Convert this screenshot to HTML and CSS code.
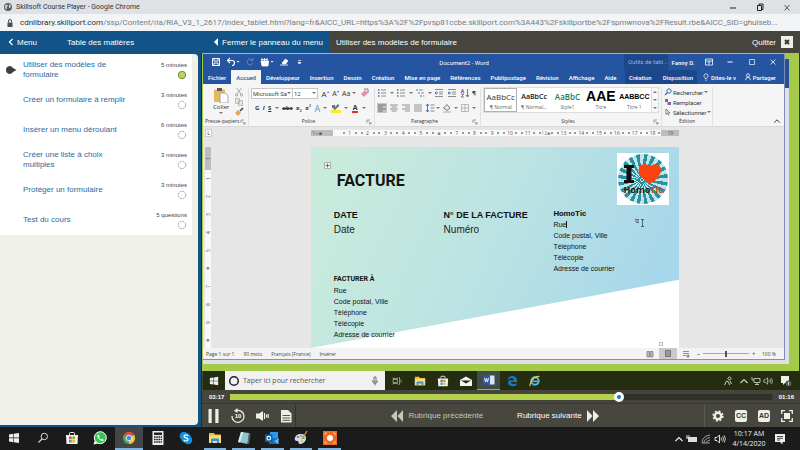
FILE: index.html
```html
<!DOCTYPE html>
<html lang="fr">
<head>
<meta charset="utf-8">
<title>Skillsoft Course Player</title>
<link rel="stylesheet" href="styles.css">
</head>
<body>
<svg class="sprite" aria-hidden="true">
  <symbol id="win" viewBox="0 0 12 12"><path d="M1 2.4 5.4 1.8V5.6H1zM6 1.7 11 1V5.6H6zM1 6.3H5.4V10.2L1 9.6zM6 6.3H11V11L6 10.3z" fill="currentColor"/></symbol>
  <symbol id="folder" viewBox="0 0 14 14"><path d="M1 2h5l1 1.5h6V12H1z" fill="#f3b93c"/><path d="M1 4.5h12V12H1z" fill="#fbdc7d"/><path d="M3 12V8.5q0-1 1-1h6q1 0 1 1V12H9V10H5v2z" fill="#3b8fd6"/></symbol>
  <symbol id="store" viewBox="0 0 14 14"><path d="M4.500 4V2.500q0-1 1-1h3q1 0 1 1V4" fill="none" stroke="#f3f3f3"/><path d="M1 4h12l-.5 9h-11z" fill="#f3f3f3"/><path d="M4 5.500h2.700v2.700H4z" fill="#e8502b"/><path d="M7.300 5.500H10v2.700H7.300z" fill="#7cb82f"/><path d="M4 8.800h2.700v2.700H4z" fill="#2a9fe0"/><path d="M7.300 8.800H10v2.700H7.300z" fill="#f7b71d"/></symbol>
  <symbol id="ring" viewBox="0 0 10 10"><circle cx="5" cy="5" r="3.700" fill="#fff" stroke="#85857f" stroke-width=".8" stroke-dasharray="1.900 1"/></symbol>
  <symbol id="sound" viewBox="0 0 12 10"><path d="M1 3.500h2L5.500 1v8L3 6.500H1z" fill="none" stroke="currentColor" stroke-width=".9"/><path d="M7 3.500q1 1.500 0 3M8.600 2.300q1.900 2.700 0 5.400M10.200 1.300q2.400 3.700 0 7.400" fill="none" stroke="currentColor" stroke-width=".8"/></symbol>
  <symbol id="up" viewBox="0 0 10 10"><path d="M1.500 7 5 3.500 8.500 7" fill="none" stroke="currentColor" stroke-width="1.200"/></symbol>
  <symbol id="launch" viewBox="0 0 6 6"><path d="M1 4V1h3M2.500 2.500 5 5M5 3v2H3" fill="none" stroke="#777" stroke-width=".7"/></symbol>
  <symbol id="list" viewBox="0 0 10 10"><path d="M1 2h1.500M1 5h1.500M1 8h1.500" stroke="#3f6fb5" stroke-width="1.400"/><path d="M4 2h5M4 5h5M4 8h5" stroke="#8c8c8c"/></symbol>
  <symbol id="indent" viewBox="0 0 10 10"><path d="M1 1.500h8M5 4h4M5 6h4M1 8.500h8" stroke="#8c8c8c"/><path d="M1 5h3M2.500 3.500 1 5l1.500 1.500" stroke="#3f6fb5" fill="none"/></symbol>
</svg>

<header class="titlebar">
  <svg class="i10" viewBox="0 0 10 10"><circle cx="5" cy="5" r="4" fill="#5a5d61"/><path d="M2 3.500 4 2.500l1 1.500-1.500 1L4 6.500 3 7.500 2 5.500zM6 2l2 1.500-.5 2L6 6z" fill="#d3d6da"/></svg>
  <span class="grow">Skillsoft Course Player - Google Chrome</span>
  <button aria-label="Réduire"><svg class="i10" viewBox="0 0 10 10"><path d="M2 6h6" stroke="#222"/></svg></button>
  <button aria-label="Restaurer"><svg class="i10" viewBox="0 0 10 10"><path d="M2.500 3.500h4v5h-4zM4 3.500V2h4v5.500H6.500" fill="none" stroke="#222"/></svg></button>
  <button aria-label="Fermer"><svg class="i10" viewBox="0 0 10 10"><path d="M2.500 3 7.500 8.500M7.500 3 2.500 8.500" stroke="#444" stroke-width=".9"/></svg></button>
</header>
<div class="address">
  <svg class="i10" viewBox="0 0 10 10"><path d="M2.500 4.500h5V9h-5z" fill="#4c4f53"/><path d="M3.500 4.500V3q0-1.500 1.500-1.500T6.500 3v1.500" fill="none" stroke="#4c4f53"/></svg>
  <span class="url"><b>cdnlibrary.skillport.com</b>/ssp/Content/ria/RIA_V3_1_2617/index_tablet.html?lang=fr&amp;AICC_URL=https%3A%2F%2Fpvsp81ccbe.skillport.com%3A443%2Fskillportbe%2Fspmwnova%2FResult.rbe&amp;AICC_SID=ghulseb...</span>
</div>

<main class="app">
  <div class="topbar">
    <div class="topmenu">
      <button class="back-btn"><svg class="i8" viewBox="0 0 8 8"><path d="M5.500 1 2.500 4l3 3" fill="none" stroke="#fff" stroke-width="1.200"/></svg>Menu</button>
      <span class="toc-title">Table des matières</span>
      <button class="fold"><svg class="i8" viewBox="0 0 8 8"><path d="M6 0v8L2 4z" fill="#fff"/></svg>Fermer le panneau du menu</button>
    </div>
    <div class="topinfo">
      <span class="grow">Utiliser des modèles de formulaire</span>
      <button class="quit">Quitter <svg class="i12" viewBox="0 0 12 12"><path d="M0 0h12v12H0z" fill="#eef0e6"/><path d="m4 4 4 4M8 4 4 8" stroke="#33332d" stroke-width="1.800"/></svg></button>
    </div>
  </div>
  <div class="columns">
    <nav class="sidebar">
      <div class="panel">
        <ul class="toc">
          <li><svg class="marker" viewBox="0 0 12 10"><path d="M4.500 1Q7 1 8 3l3.500 2L8 7Q7 9 4.500 9 1 8.500 1 5t3.500-4z" fill="#3f3f38"/></svg><a href="#">Utiliser des modèles de formulaire</a><span class="dur">5 minutes<svg class="i10" viewBox="0 0 10 10"><circle cx="5" cy="5" r="3.700" fill="#b9d558" stroke="#6f7d3f" stroke-width=".9"/></svg></span></li>
          <li><a href="#">Créer un formulaire à remplir</a><span class="dur">3 minutes<svg class="i10"><use href="#ring"/></svg></span></li>
          <li><a href="#">Insérer un menu déroulant</a><span class="dur">6 minutes<svg class="i10"><use href="#ring"/></svg></span></li>
          <li><a href="#">Créer une liste à choix multiples</a><span class="dur">3 minutes<svg class="i10"><use href="#ring"/></svg></span></li>
          <li><a href="#">Protéger un formulaire</a><span class="dur">3 minutes<svg class="i10"><use href="#ring"/></svg></span></li>
          <li><a href="#">Test du cours</a><span class="dur">5 questions<svg class="i10"><use href="#ring"/></svg></span></li>
        </ul>
      </div>
    </nav>

    <section class="player">
      <div class="stage">
        <div class="behind">
          <div class="word">
            <div class="wtitle">
              <div class="qat">
                <svg class="i10" viewBox="0 0 10 10"><path d="M1.500 1.500h7v7h-7zM3 1.500V4h4V1.500M3 8.500V6h4v2.500" fill="none" stroke="#fff"/></svg>
                <svg class="i14" viewBox="0 0 14 10"><path d="M4 1 1.500 3.500 4 6M2 3.500h4q2.500 0 2.500 2.500T6 8.500" fill="none" stroke="#fff" stroke-width="1.200"/><path d="m10.500 4 1.500 1.500L13.500 4" fill="#fff"/></svg>
                <svg class="i10" viewBox="0 0 10 10"><path d="M7.500 3A3 3 0 1 0 8 6M8 1v2.500H5.500" fill="none" stroke="#6687bd"/></svg>
                <svg class="i14" viewBox="0 0 14 10"><path d="M1 4h7.500L8 9H2zM2 1v3M4.500 1v3M7 1v3M1 2.500h7" fill="#fff" stroke="#fff" stroke-width=".8"/><path d="m10.500 4 1.500 1.500L13.500 4" fill="#fff"/></svg>
                <svg class="i10" viewBox="0 0 10 10"><path d="M1 8h8M3 6l3.500-4L9 4 6.500 7H4z" fill="#fff" stroke="#fff" stroke-width=".8"/></svg>
                <svg class="i10" viewBox="0 0 10 10"><path d="M4 3.500h3M4 5.500h3L5.500 7z" fill="#fff" stroke="#fff" stroke-width=".7"/></svg>
              </div>
              <span class="docname">Document2 - Word</span>
              <span class="ctx-name">Outils de tabl...</span>
              <span class="user">Fanny D.</span>
              <div class="wbtns">
                <svg class="i10" viewBox="0 0 10 10"><path d="M1.500 2h7v6h-7zM1.500 4h7M5 7.500v-3M4 5.500 5 4.500l1 1" fill="none" stroke="#fff" stroke-width=".8"/></svg>
                <svg class="i10" viewBox="0 0 10 10"><path d="M2.500 5h5" stroke="#fff"/></svg>
                <svg class="i10" viewBox="0 0 10 10"><path d="M2.500 2.500h5v5h-5z" fill="none" stroke="#dbe4f3" stroke-width=".8"/></svg>
                <svg class="i10" viewBox="0 0 10 10"><path d="m2.500 2.500 5 5M7.500 2.500l-5 5" stroke="#fff" stroke-width=".8"/></svg>
              </div>
            </div>
            <div class="wtabs">
              <div class="tabs"><button>Fichier</button><button class="on">Accueil</button><button>Développeur</button><button>Insertion</button><button>Dessin</button><button>Création</button><button>Mise en page</button><button>Références</button><button>Publipostage</button><button>Révision</button><button>Affichage</button><button>Aide</button></div>
              <div class="ctx-tabs"><button>Création</button><button>Disposition</button></div>
              <div class="help">
                <span><svg class="i8" viewBox="0 0 8 10"><path d="M3 7Q3 6 2 5 1 4 1.500 2.500 2.500 1 4 1t2.500 1.500Q7 4 6 5 5 6 5 7zM3 9h2" fill="none" stroke="#fff" stroke-width=".9"/></svg>Dites-le v</span>
                <span><svg class="i8" viewBox="0 0 8 10"><circle cx="4" cy="3" r="2" fill="none" stroke="#fff"/><path d="M1 9q0-3.500 3-3.500T7 9" fill="none" stroke="#fff"/></svg>Partager</span>
              </div>
            </div>

            <div class="ribbon">
              <div class="group">
                <div class="clip">
                  <div class="paste"><svg class="i16" viewBox="0 0 16 16"><path d="M1 2.500h11V15H1z" fill="#e9b65e"/><path d="M4 1h5v3H4z" fill="#5e5a55"/><path d="M7 6h5l3 2.500V16H7z" fill="#fff" stroke="#8a93a3" stroke-width=".8"/></svg><span>Coller</span><i class="car"></i></div>
                  <div class="mini">
                    <svg class="i10" viewBox="0 0 10 10"><path d="M2.500 1 7 7M7.500 1 3 7" stroke="#aaa"/><circle cx="2.500" cy="8" r="1.200" fill="none" stroke="#aaa"/><circle cx="7.500" cy="8" r="1.200" fill="none" stroke="#aaa"/></svg>
                    <svg class="i10" viewBox="0 0 10 10"><path d="M1.500 1.500h4v5h-4zM4.500 3.500h4v5h-4z" fill="#e8e8e8" stroke="#bbb"/></svg>
                    <svg class="i10" viewBox="0 0 10 10"><path d="m9 1-3 3" stroke="#444" stroke-width="1.600"/><path d="M4 3 7 6 4 9 1 6z" fill="#eda552"/></svg>
                  </div>
                </div>
                <div class="glabel">Presse-papiers<svg class="i6"><use href="#launch"/></svg></div>
              </div>

              <div class="group">
                <div class="tools">
                  <div class="trow fontrow">
                    <div class="combos"><span class="pick"><select aria-label="Police"><option>Microsoft Sa</option></select><i class="car"></i></span><span class="pick size"><select aria-label="Taille"><option>12</option></select><i class="car"></i></span></div>
                    <span class="big">A<sup>▴</sup></span><span class="mid">A<sup>▾</sup></span><span class="aa">Aa<i class="car"></i></span>
                    <svg class="i10" viewBox="0 0 10 10"><path d="m1 6 4-4 3 3-4 4z" fill="#ea8ba2"/><path d="M4 1h4v4" fill="none" stroke="#6f7fa8"/></svg>
                  </div>
                  <div class="trow format">
                    <b>G</b><b><i>I</i></b><b><u>S</u></b><i class="car"></i><b><s>abc</s></b><b>x<sub>2</sub></b><b>x<sup>2</sup></b>
                    <span class="glow">A</span><i class="car"></i>
                    <svg class="i10" viewBox="0 0 10 10"><path d="M0 7h10v3H0z" fill="#f7ee22"/><path d="m2 6 5-5 1.500 1.500L4 7zM1 2h3v3H1z" fill="#6c7482"/></svg><i class="car"></i>
                    <span class="red">A</span><i class="car"></i>
                  </div>
                </div>
                <div class="glabel"><span class="grow">Police</span><svg class="i6"><use href="#launch"/></svg></div>
              </div>

              <div class="group">
                <div class="tools">
                  <div class="trow para">
                    <svg class="i10"><use href="#list"/></svg><i class="car"></i><svg class="i10"><use href="#list"/></svg><i class="car"></i>
                    <svg class="i10" viewBox="0 0 10 10"><path d="M1 2h2M3 5h2M5 8h2" stroke="#3f6fb5" stroke-width="1.200"/><path d="M4 2h4M6 5h3M8 8h1.500" stroke="#8c8c8c"/></svg><i class="car"></i>
                    <svg class="i10"><use href="#indent"/></svg><svg class="i10"><use href="#indent"/></svg>
                    <svg class="i10" viewBox="0 0 10 10"><path d="m1 5 1.500-4L4 5M1.500 3.500h2M1 6h3L1 9h3" fill="none" stroke="#7a5fa0" stroke-width=".9"/><path d="M7.500 1v8M6 7l1.500 2L9 7" fill="none" stroke="#3f6fb5" stroke-width=".9"/></svg>
                    <b>¶</b>
                  </div>
                  <div class="trow para">
                    <svg class="i10 sel" viewBox="0 0 10 10"><path d="M1 2h8M1 4h5M1 6h8M1 8h5" stroke="#666" stroke-width=".9"/></svg>
                    <svg class="i10" viewBox="0 0 10 10"><path d="M1 2h8M2.500 4h5M1 6h8M2.500 8h5" stroke="#888" stroke-width=".9"/></svg>
                    <svg class="i10" viewBox="0 0 10 10"><path d="M1 2h8M4 4h5M1 6h8M4 8h5" stroke="#888" stroke-width=".9"/></svg>
                    <svg class="i10" viewBox="0 0 10 10"><path d="M1 2h8M1 4h8M1 6h8M1 8h8" stroke="#888" stroke-width=".9"/></svg>
                    <svg class="i10" viewBox="0 0 10 10"><path d="M2.500 1v8M1 3l1.500-2L4 3M1 7l1.500 2L4 7" fill="none" stroke="#3f6fb5" stroke-width=".9"/><path d="M5.500 2h4M5.500 5h4M5.500 8h4" stroke="#888"/></svg><i class="car"></i>
                    <svg class="i10" viewBox="0 0 10 10"><path d="m1.500 5 3.500-3.500L8 5 5 7.500z" fill="#eee" stroke="#555" stroke-width=".8"/><path d="M1 9h8" stroke="#aaa"/></svg><i class="car"></i>
                    <svg class="i10" viewBox="0 0 10 10"><path d="M1.500 1.500h7v7h-7zM5 1.500v7M1.500 5h7" fill="none" stroke="#aaa" stroke-width=".8"/></svg><i class="car"></i>
                  </div>
                </div>
                <div class="glabel"><span class="grow">Paragraphe</span><svg class="i6"><use href="#launch"/></svg></div>
              </div>

              <div class="group">
                <div class="gallery">
                  <button class="on"><span>AaBbCc</span><small>¶ Normal</small></button>
                  <button><span class="g-bold">AaBbCc</span><small>¶ Normal...</small></button>
                  <button><span class="g-green">AaBbC</span><small>Style1</small></button>
                  <button><span class="g-big">AAE</span><small>Titre</small></button>
                  <button><span class="g-caps">AABBCC</span><small>Titre 1</small></button>
                  <div class="gscroll"><i class="car flip"></i><i class="car"></i><i class="car"></i></div>
                </div>
                <div class="glabel"><span class="grow">Styles</span><svg class="i6"><use href="#launch"/></svg></div>
              </div>

              <div class="group">
                <div class="edit">
                  <span><svg class="i8" viewBox="0 0 8 8"><circle cx="5" cy="3" r="2.200" fill="none" stroke="#3f6fb5"/><path d="M3.500 4.500 1 7" stroke="#3f6fb5" stroke-width="1.200"/></svg>Rechercher<i class="car"></i></span>
                  <span><svg class="i8" viewBox="0 0 8 8"><path d="M1 1h3v3H1z" fill="#6c7482"/><path d="M3.500 4H7v3H3.500z" fill="#8a5fa8"/></svg>Remplacer</span>
                  <span><svg class="i8" viewBox="0 0 8 8"><path d="M2 1v5.500L3.500 5 5 7.500M2 1l4 4H3.500" fill="none" stroke="#666" stroke-width=".8"/></svg>Sélectionner<i class="car"></i></span>
                </div>
                <div class="glabel"><span class="grow">Édition</span></div>
              </div>
              <div class="collapse"><svg class="i8"><use href="#up"/></svg></div>
            </div>

            <div class="hrow">
              <span class="corner">L</span>
              <div class="ruler"><span class="neg">·1·ı·■</span><span>1</span><span>2</span><span>3</span><span>4</span><span>5</span><span class="stop">■</span><span>7</span><span>8</span><span>9</span><span>10</span><span>11</span><span class="stop">12■</span><span>13</span><span>14</span><span>15</span><span>16</span><span>17</span><span>18</span><span class="end">19</span></div>
            </div>

            <div class="canvas">
              <div class="vruler"><span class="vneg">1</span><span>1</span><span>2</span><span>3</span><span>4</span><span>5</span><span class="stop">■</span><span>7</span><span>8</span><span>9</span><span class="stop">■</span></div>
              <article class="page">
                <div class="bill">
                  <h1>FACTURE</h1>
                  <div class="logo">
                    <div class="rays"></div>
                    <svg class="logo-art" viewBox="0 0 52 52"><path d="M7 12h10v3h-2.500v12H17v3H7v-3h2.500V15H7z" fill="#111"/><path d="M33 31Q21 24 21.500 17 22.500 11 28 11q3 0 5 2.500Q35 11 38.500 11q6 1 5.500 7-1 7-11 13z" fill="#fb4310"/></svg>
                    <span class="brand">Homo<em>Tic</em></span>
                  </div>
                  <section><h2>DATE</h2><p class="lg">Date</p></section>
                  <section><h2>N° DE LA FACTURE</h2><p class="lg">Numéro</p></section>
                  <section class="addr"><h3>HomoTic</h3><p><span class="typed">Rue</span></p><p>Code postal, Ville</p><p>Téléphone</p><p>Télécopie</p><p>Adresse de courrier</p></section>
                  <section class="addr"><h3 class="caps">FACTURER À</h3><p>Rue</p><p>Code postal, Ville</p><p>Téléphone</p><p>Télécopie</p><p>Adresse de courrier</p></section>
                </div>
                <svg class="handle" viewBox="0 0 7 7"><path d="M.5.500h6v6h-6z" fill="#eef4f2" stroke="#999" stroke-width=".7"/><path d="M3.500 1.500v4M1.500 3.500h4" stroke="#555" stroke-width=".8"/></svg>
                <svg class="cursor" viewBox="0 0 12 10"><path d="M1 1.500h4M1 3h4M2 4.500h3" stroke="#556" stroke-width=".8"/><path d="M7 1.500h3M8.500 1.500v7M7 8.500h3" stroke="#445" stroke-width=".8"/></svg>
                <span class="endmark"></span>
              </article>
            </div>

            <div class="status">
              <span>Page 1 sur 1</span><span>90 mots</span><span>Français (France)</span><span class="grow">Insérer</span>
              <div class="views">
                <svg class="i8" viewBox="0 0 8 8"><path d="M1 1.500h2.500V7H1zM4.500 1.500H7V7H4.500z" fill="#bbb" stroke="#777" stroke-width=".7"/></svg>
                <svg class="i8" viewBox="0 0 8 8"><path d="M1.500 1h5v6h-5z" fill="#999" stroke="#777"/></svg>
                <svg class="i8" viewBox="0 0 8 8"><path d="M1 1.500h6M1 3.500h6M1 5.500h3" stroke="#777" stroke-width=".8"/><circle cx="6" cy="6" r="1.500" fill="#888"/></svg>
              </div>
              <div class="zoombar"><b>−</b><input type="range" aria-label="Zoom" value="50"><b>+</b><span>100 %</span></div>
            </div>
          </div>
        </div>
      </div>

      <div class="innerbar">
        <span class="istart"><svg class="i10"><use href="#win"/></svg></span>
        <label class="search"><svg class="i12" viewBox="0 0 12 12"><circle cx="6" cy="6" r="4.300" fill="none" stroke="#222" stroke-width="1.500"/></svg><input type="text" aria-label="Rechercher" placeholder="Taper ici pour rechercher"><svg class="i10" viewBox="0 0 10 10"><path d="M4 1h2v5H4zM2.500 4.500Q2.500 7.500 5 7.500t2.500-3M5 7.500v2" fill="none" stroke="#555" stroke-width=".8"/></svg></label>
        <div class="iapps">
          <span><svg class="i10" viewBox="0 0 10 10"><path d="M1 1.500v1h4.500v-1M1 8.500v-1h4.500v1M1 3.500h4.500v3H1zM7.500 1v8M9 3.500v3" fill="none" stroke="#9ba38e" stroke-width=".9"/></svg></span>
          <span><svg class="i12"><use href="#folder"/></svg></span>
          <span><svg class="i12"><use href="#store"/></svg></span>
          <span><svg class="i12" viewBox="0 0 12 12"><path d="m0 5 6-3.500L12 5v6H0z" fill="#f2f2f2"/><path d="m1 5.500 5 3 5-3z" fill="#24270f"/></svg></span>
          <span class="on"><svg class="i12" viewBox="0 0 12 12"><path d="M6 1.500h5.500v9H6z" fill="#dbe6f6"/><path d="M0 2 7 .800v10.400L0 10z" fill="#2a5cab"/><path d="m1.500 4 1 4 1-3.500 1 3.500 1-4" fill="none" stroke="#fff" stroke-width=".9"/></svg></span>
          <span><svg class="i12" viewBox="0 0 12 12"><path d="M1 6Q1.500 1 6.500 1 11 1.500 11 6v1H4.500Q5 9 7.500 9q1.500 0 3-.8v2.300Q5 12.500 2.500 9.500 1 6 5 4.300 4.500 5 4.500 5.500H8Q8 3 5.500 3 2.500 3.300 1 6z" fill="#1d78cb"/></svg></span>
          <span><svg class="i12" viewBox="0 0 12 12"><circle cx="6" cy="6" r="3.700" fill="none" stroke="#4fbdeb" stroke-width="2"/><path d="M3.500 6.300h6" stroke="#4fbdeb" stroke-width="1.500"/><path d="M1.500 11Q0 10 3 5.500T10.500 1.500" fill="none" stroke="#f1ca42" stroke-width="1.200"/></svg></span>
        </div>
        <div class="itray">
          <svg class="i10" viewBox="0 0 10 10"><circle cx="6.500" cy="2.500" r="1.500" fill="none" stroke="#c8ccc0"/><path d="m1.500 9 2-4 2 1 1 3M7 5l1.500 3" fill="none" stroke="#c8ccc0"/></svg>
          <svg class="i10 push"><use href="#up"/></svg>
          <svg class="i10" viewBox="0 0 10 10"><path d="M3 2.500h6v4H3zM6 6.500v2M4 8.500h4M1 1v3h2" fill="none" stroke="#c8ccc0" stroke-width=".9"/></svg>
          <svg class="i10"><use href="#sound"/></svg>
          <svg class="i12" viewBox="0 0 12 12"><path d="M1 1h8v7H5L3 10V8H1z" fill="#eee"/><circle cx="8.500" cy="8.500" r="3" fill="#555"/><path d="M8.500 7v3" stroke="#fff" stroke-width=".8"/></svg>
        </div>
      </div>

      <div class="seek"><span>03:17</span><input type="range" aria-label="Position" value="72"><span>01:16</span></div>
      <div class="controls">
        <div class="cleft">
          <button aria-label="Pause"><svg class="i16" viewBox="0 0 16 16"><path d="M2.500 1h3.200v14H2.500zM9.300 1h3.200v14H9.300z" fill="#eef0e6"/></svg></button>
          <button class="replay" aria-label="Reculer de 10 secondes"><svg class="i16" viewBox="0 0 16 16"><path d="M6 2.700A6 6 0 1 1 2 8" fill="none" stroke="#eef0e6" stroke-width="1.300"/><path d="M7.500 0v5L4 2.800z" fill="#eef0e6"/></svg><span>10</span></button>
          <button aria-label="Volume"><svg class="i16" viewBox="0 0 16 16"><path d="M2 5.500h3L9 3v10l-4-2.500H2z" fill="#eef0e6"/><path d="M10.500 5v6M12.500 6.500v3M14.200 6v4" stroke="#eef0e6" stroke-width="1.200"/></svg></button>
          <button aria-label="Transcription"><svg class="i16" viewBox="0 0 16 16"><path d="M3 2h7l3.500 3.500V14.500H3z" fill="#eef0e6"/><path d="M4.500 7.500h7.500M4.500 10h7.500M4.500 12.300h7.500" stroke="#45453d" stroke-width=".9"/></svg></button>
        </div>
        <div class="cmid">
          <button class="prev"><svg class="i14" viewBox="0 0 14 14"><path d="M7 1v12L1 7zM13 1v12L7.500 7z" fill="#c5c7bd"/></svg>Rubrique précédente</button>
          <button>Rubrique suivante<svg class="i14" viewBox="0 0 14 14"><path d="M1 1v12l5.500-6zM7 1v12l6-6z" fill="#eef0e6"/></svg></button>
        </div>
        <div class="cright">
          <button aria-label="Paramètres"><svg class="i12" viewBox="0 0 12 12"><circle cx="6" cy="6" r="3.200" fill="none" stroke="#eef0e6" stroke-width="2.400"/><circle cx="6" cy="6" r="4.900" fill="none" stroke="#eef0e6" stroke-width="1.500" stroke-dasharray="2 1.850"/></svg></button>
          <button class="chip">CC</button>
          <button class="chip">AD</button>
          <button aria-label="Plein écran"><svg class="i12" viewBox="0 0 12 12"><path d="M3 3h6v6H3z" fill="#eef0e6"/><path d="M.7 4V.700H4M8 .700h3.300V4M11.300 8v3.300H8M4 11.300H.7V8" fill="none" stroke="#eef0e6" stroke-width="1.300"/></svg></button>
        </div>
      </div>
    </section>
  </div>
</main>

<footer class="taskbar">
  <div class="apps">
    <span><svg class="i12"><use href="#win"/></svg></span>
    <span><svg class="i12" viewBox="0 0 12 12"><circle cx="7.300" cy="4.500" r="3.200" fill="none" stroke="#ddd"/><path d="M5 7 1.500 10.500" stroke="#ddd" stroke-width="1.100"/></svg></span>
    <span><svg class="i14"><use href="#store"/></svg></span>
    <span><svg class="i14" viewBox="0 0 14 14"><circle cx="7.300" cy="6.700" r="6" fill="#35c655" stroke="#fff"/><path d="m.5 13.500 1.300-4 3 3z" fill="#fff"/><path d="M5 3.500Q3.500 4.500 5 7t4.500 3.300Q11 9.500 10.500 8.500L9 7.700l-1 .8Q6.500 8 6 6.500l.7-.9L6 4z" fill="#fff"/></svg></span>
    <span class="on run"><svg class="i14" viewBox="0 0 14 14"><circle cx="7" cy="7" r="6" fill="#4caf50"/><path d="M7 7 1.800 4A6 6 0 0 1 12.200 4z" fill="#e5473a"/><path d="M7 7 12.200 4A6 6 0 0 1 7 13z" fill="#fbc62f"/><circle cx="7" cy="7" r="2.800" fill="#4587ef" stroke="#fff" stroke-width=".8"/></svg></span>
    <span><svg class="i14" viewBox="0 0 14 14"><path d="M1.500 0h11v14h-11z" fill="#eee"/><path d="M3 1.500h8v2.500H3z" fill="#222"/><path d="M3 6h8M3 8.500h8M3 11h8" stroke="#222" stroke-width="1.500" stroke-dasharray="1.600 .600"/></svg></span>
    <span><svg class="i14" viewBox="0 0 14 14"><circle cx="5" cy="5" r="4.300" fill="#1190dc"/><circle cx="9" cy="9" r="4.300" fill="#1190dc"/><circle cx="7" cy="7" r="5" fill="#1190dc"/><path d="M9 5Q8.500 3.800 7 3.800T5 5.300Q5 6.600 7 6.900t2 1.700Q9 10 7 10T5 8.700" fill="none" stroke="#fff" stroke-width="1.200"/></svg></span>
    <span class="run"><svg class="i14"><use href="#folder"/></svg></span>
    <span class="run"><svg class="i14" viewBox="0 0 14 14"><path d="m4 1 8 1-1.500 11L1 11z" fill="#8fc5cf"/><path d="M4 1 1 11l2 .500L6.500 1.300z" fill="#d5e9ec"/><path d="m12 2 1.500 1.500-1.500 9-1.500.500z" fill="#596d70"/></svg></span>
    <span class="run"><svg class="i14" viewBox="0 0 14 14"><path d="M5 1h8v7H5z" fill="#2b9ae8"/><path d="M4 7h9.500v6H4z" fill="#1a6fc0"/><path d="m4 7 5 3.500L13.500 7v6z" fill="#5cc0f5"/><path d="M0 3.500h7.500V11H0z" fill="#0f5fae"/><circle cx="3.800" cy="7.200" r="1.800" fill="none" stroke="#fff" stroke-width="1.100"/></svg></span>
    <span class="run"><svg class="i14" viewBox="0 0 14 14"><path d="M6 3Q12 2.500 12 7t-5 6q-3 .5-2.500-2Q4.500 9.500 2.500 10 0 9.500 1 6.500 2.500 3.300 6 3z" fill="#cfdde6"/><circle cx="4" cy="6" r="1.100" fill="#d9483b"/><circle cx="7" cy="5" r="1.100" fill="#4b9bd8"/><circle cx="9.500" cy="7" r="1.100" fill="#4faf50"/><circle cx="8" cy="10" r="1.100" fill="#efbe34"/><path d="M13 0 8 8" stroke="#c98a44" stroke-width="1.400"/></svg></span>
    <span class="run"><svg class="i14" viewBox="0 0 14 14"><path d="M0 0h14v14H0z" fill="#ef6a24"/><circle cx="7" cy="7" r="3" fill="#fff"/><path d="M2 4V2h2M10 2h2v2M12 10v2h-2M4 12H2v-2" fill="none" stroke="#f9c6a5" stroke-width=".9"/></svg></span>
  </div>
  <div class="tray">
    <svg class="i10"><use href="#up"/></svg>
    <svg class="i12" viewBox="0 0 12 12"><path d="M2 4h9v5H2z" fill="#ddd"/><path d="M1 2v3M3 2v2M0 5h3" stroke="#ddd"/></svg>
    <svg class="i12" viewBox="0 0 12 12"><path d="M2 10Q2 3 10 2M4 10q0-4.500 6-5.500M6.500 10Q6.500 7.500 10 7M2 10h8" fill="none" stroke="#aaa" stroke-width=".9"/></svg>
    <svg class="i12"><use href="#sound"/></svg>
    <div class="clock"><span>10:17 AM</span><span>4/14/2020</span></div>
    <svg class="i12" viewBox="0 0 12 12"><path d="M1 1h10v8H8.500v2.500L6 9H1z" fill="#eee"/><path d="M3 3.500h6M3 5.300h6M3 7h3" stroke="#222" stroke-width=".8"/></svg>
  </div>
</footer>
</body>
</html>
```

FILE: styles.css
```css
* { box-sizing: border-box; }
body {
  margin: 0;
  height: 100vh;
  display: grid;
  grid-template-columns: minmax(0, 1fr);
  grid-template-rows: 14px 17px minmax(0, 1fr) 23px;
  font-family: "Liberation Sans", Arial, sans-serif;
  font-size: 8px;
  background: #1c1c1c;
  overflow: hidden;
}
button, input, select { font: inherit; color: inherit; background: none; border: 0; padding: 0; margin: 0; }
button { display: flex; align-items: center; }
h1, h2, h3, p, ul { margin: 0; padding: 0; }
svg { display: block; flex: none; }
.sprite { position: absolute; width: 0; height: 0; }
.grow { flex: 1; }
.i6 { width: 6px; height: 6px; }
.i8 { width: 8px; height: 8px; }
.i10 { width: 10px; height: 10px; }
.i12 { width: 12px; height: 12px; }
.i14 { width: 14px; height: 14px; }
.i16 { width: 16px; height: 16px; }

/* browser chrome */
.titlebar, .address { display: flex; align-items: center; white-space: nowrap; }
.titlebar { background: #dee1e6; color: #333; padding: 0 8px 0 3px; gap: 3px; font: 7px Roboto, sans-serif; }
.titlebar button { margin-left: 14px; }
.address { background: #f2f4f6; color: #777b80; padding: 0 8px 0 5px; gap: 5px; font: 8px Roboto, sans-serif; }
.url b { font-weight: 400; color: #333; }

/* course header */
.app { display: flex; flex-direction: column; background: #135382; min-height: 0; }
.topbar { display: flex; height: 22px; flex: none; color: #fff; }
.topmenu { width: 330px; display: flex; align-items: center; padding: 0 7px 0 7px; background: #135488; }
.back-btn { width: 60px; gap: 2px; }
.toc-title { flex: 1; }
.fold { gap: 2px; }
.topinfo { flex: 1; display: flex; align-items: center; padding: 0 7px 0 6px; background: #45453d; }
.quit { gap: 5px; }
.columns { flex: 1; display: flex; min-height: 0; }

/* table of contents */
.sidebar { width: 202px; flex: none; padding: 1px 3px 2px 0; background: #135382; border-right: 1px solid #0b2f4d; }
.panel { height: 100%; background: #eff0e8; border-radius: 0 4px 4px 0; padding-right: 6px; overflow: hidden; }
.toc { list-style: none; background: #fff; padding-bottom: 1px; }
.toc li { position: relative; height: 30px; display: flex; align-items: center; justify-content: space-between; padding: 2px 5px 0 23px; }
.toc a { color: #1f6ba5; text-decoration: none; line-height: 10px; width: 110px; }
.marker { position: absolute; left: 5px; top: 11px; width: 12px; height: 10px; }
.dur { display: flex; flex-direction: column; align-items: flex-end; gap: 1px; font-size: 6px; line-height: 8px; color: #444; }

/* player */
.player { flex: 1; min-width: 0; display: flex; flex-direction: column; background: #45453d; }
.stage { flex: 1; min-height: 0; background: #a5c948; padding: 1px 10px 7px 1px; border-right: 1px solid #33352a; }
.behind { height: 100%; padding: 0 4px 4px 0; background: linear-gradient(#a5c948 5px, #24519a 5px 34px, #dfe1e8 34px); }
.word { height: 100%; display: flex; flex-direction: column; background: #e6e6e6; border-right: 1px solid #7f8fb5; border-bottom: 1px solid #7f8fb5; font-family: "Open Sans", sans-serif; font-size: 6px; color: #333; white-space: nowrap; }
.wtitle, .wtabs { display: flex; background: #2555a0; color: #fff; flex: none; font-family: Roboto, sans-serif; }
.wtitle { height: 16px; align-items: center; }
.wtabs { height: 14px; }
.qat { display: flex; align-items: center; gap: 5px; padding-left: 8px; }
.qat .i14 { height: 10px; }
.docname { flex: 1; text-align: center; }
.ctx-name, .ctx-tabs { background: #1d478b; }
.ctx-name { width: 44px; line-height: 16px; color: #9db6de; padding-left: 4px; }
.user { width: 30px; text-align: center; font-weight: 500; }
.wbtns { width: 86px; display: flex; align-items: center; justify-content: space-between; padding: 0 6px; }
.tabs { flex: 1; display: flex; }
.tabs button { padding: 0 5px; font-weight: 500; }
.ctx-tabs button { padding: 0 4px; font-weight: 500; }
.tabs .on { background: #f5f5f5; color: #2555a0; }
.ctx-tabs { width: 72px; display: flex; justify-content: space-between; }
.help { width: 87px; display: flex; align-items: center; justify-content: space-between; padding: 0 8px 0 5px; font-weight: 500; }
.help span { display: flex; align-items: center; gap: 1px; }

/* ribbon */
.ribbon { display: grid; grid-template-columns: 46px 126px 106px 181px 51px 1fr; height: 43px; flex: none; background: #f5f5f5; border-bottom: 1px solid #d8d8d8; padding: 3px 0 0; }
.group { display: flex; flex-direction: column; justify-content: space-between; border-right: 1px solid #e0e0e0; padding: 0 2px; min-width: 0; }
.glabel { display: flex; align-items: center; justify-content: space-between; text-align: center; height: 9px; line-height: 9px; font-size: 5px; }
.car { width: 0; height: 0; flex: none; border: 1px solid transparent; border-width: 2px 2px 0; border-top-color: #777; }
.flip { transform: rotate(180deg); }
.clip { display: flex; justify-content: space-between; padding: 0 2px 0 8px; }
.paste { display: flex; flex-direction: column; align-items: center; gap: 1px; line-height: 7px; }
.mini { display: flex; flex-direction: column; }
.tools { display: flex; flex-direction: column; gap: 3px; }
.trow { display: flex; align-items: center; justify-content: space-between; height: 12px; padding-right: 2px; }
.trow sup, .trow sub { font-size: 4px; line-height: 0; color: #3f6fb5; }
.combos { display: flex; }
.pick { display: flex; align-items: center; height: 11px; width: 42px; border: 1px solid #c6c6c6; background: #fff; padding: 0 1px; color: #444; font-family: Roboto, sans-serif; }
.pick.size { width: 25px; border-left: 0; }
.pick select { appearance: none; flex: 1; min-width: 0; height: 9px; }
.big { font-size: 8px; }
.mid { font-size: 7px; }
.aa { display: flex; align-items: center; gap: 2px; font-size: 7px; }
.format { padding: 0 6px 0 4px; }
.glow { font-size: 9px; color: #5a8fd0; }
.red { font-size: 7px; line-height: 7px; font-weight: 700; border-bottom: 2px solid #e02d1f; padding: 0 1px; }
.sel { background: #c6c6c6; }
.gallery { display: grid; grid-template-columns: repeat(5, 1fr) 7px; height: 26px; background: #fff; border: 1px solid #ddd; }
.gallery button { flex-direction: column; justify-content: space-between; overflow: hidden; padding: 2px 0 1px; min-width: 0; }
.gallery button.on { border: 1px solid #b0b0b0; padding: 1px 0 0; }
.gallery button span { font-size: 8px; line-height: 13px; }
.gallery small { font-size: 5px; line-height: 8px; color: #666; }
.gallery button .g-bold { color: #111; font-weight: 600; font-size: 7px; }
.gallery button .g-green { color: #1f7a55; font-weight: 600; }
.gallery button .g-big { font-family: "Liberation Sans", sans-serif; font-size: 14px; font-weight: 700; color: #000; }
.gallery button .g-caps { font-family: "Liberation Sans", sans-serif; font-size: 7px; font-weight: 700; color: #000; }
.gscroll { display: flex; flex-direction: column; align-items: center; justify-content: space-around; border-left: 1px solid #ddd; background: #f7f7f7; }
.edit { display: flex; flex-direction: column; font-family: Roboto, sans-serif; }
.edit span { display: flex; align-items: center; gap: 1px; height: 10px; }
.collapse { display: flex; align-items: flex-end; justify-content: flex-end; padding: 0 3px 1px 0; }

/* document area */
.hrow, .canvas { display: grid; grid-template-columns: 106fr 369fr 105fr; padding-left: 2px; }
.hrow { height: 20px; flex: none; align-items: start; padding-top: 2px; }
.corner { width: 7px; height: 8px; background: #fafafa; border: 1px solid #ccc; font-size: 5px; line-height: 6px; text-align: center; }
.ruler { display: flex; margin-top: 1px; height: 6px; background: #f9f9f9; font-size: 5px; line-height: 6px; color: #555; }
.ruler span { flex: 1; text-align: center; min-width: 0; background: radial-gradient(circle at 3px 3px, #999 0 1px, transparent 1px), radial-gradient(circle at 15px 3px, #999 0 1px, transparent 1px); }
.ruler .neg { flex: 0 0 30px; text-align: left; background: linear-gradient(90deg, #bdbdbd 22px, transparent 22px); }
.ruler .end { background: #bdbdbd; }
.stop { color: #888; }
.canvas { flex: 1; min-height: 0; }
.vruler { width: 6px; display: flex; flex-direction: column; background: #f9f9f9; font-size: 5px; line-height: 6px; color: #555; overflow: hidden; }
.vruler span { height: 18px; flex: none; writing-mode: vertical-rl; transform: rotate(180deg); text-align: center; }
.vruler .vneg { height: 23px; background: #bdbdbd; }
.page { position: relative; overflow: hidden; color: #151515; font-family: "Liberation Sans", sans-serif; background: #fff; }
.page::before { content: ""; position: absolute; inset: 0; background: linear-gradient(115deg, #c9ebdc 8%, #bce3e3 48%, #a6d7ea 88%); clip-path: polygon(0 0, 100% 0, 100% 66%, 0 100%); }
.bill { position: relative; display: grid; grid-template-columns: 110fr 110fr 126fr; padding-left: 23px; }
.bill h1 { grid-column: 1 / 3; font: 700 16px/18px Roboto, sans-serif; padding: 25px 0 0 3px; }
.logo { position: relative; justify-self: end; width: 52px; height: 52px; margin: 6px 10px 3px 0; background: #fff; }
.rays { position: absolute; inset: 1px; border-radius: 50%; background: repeating-conic-gradient(from 4deg at 48% 52%, #26929f 0 9deg, #c4e3e8 9deg 18deg); }
.logo-art { position: absolute; inset: 0; width: 52px; height: 52px; }
.brand { position: absolute; left: 0; right: 0; top: 31px; text-align: center; font: 700 9px/12px "Open Sans", sans-serif; color: #222; }
.brand em { font-style: normal; color: #c9452c; }
.bill h2 { font-size: 9px; line-height: 14px; color: #111; }
.bill .lg { font-size: 10px; line-height: 15px; color: #222; }
.addr { font-size: 7px; line-height: 11px; }
.addr h3 { font: 700 8px/11px Roboto, sans-serif; color: #111; }
.addr .caps { font-size: 7px; }
.addr p { color: #111; }
.typed { border-right: 1px solid #111; }
.handle { position: absolute; left: 13px; top: 15px; width: 7px; height: 7px; }
.cursor { position: absolute; left: 323px; top: 71px; width: 12px; height: 10px; }
.endmark { position: absolute; right: 16px; bottom: 2px; width: 4px; height: 4px; border: 1px solid #bbb; }
.status { display: flex; align-items: center; gap: 9px; height: 11px; flex: none; padding: 0 8px 0 3px; background: #f3f3f3; font-size: 5px; color: #444; }
.views { display: flex; align-items: center; }
.views .i8 { width: 18px; padding: 0 5px; height: 8px; }
.views .i8:nth-child(2) { background: #c9c9c9; height: 11px; }
.zoombar { display: flex; align-items: center; gap: 3px; margin-left: -7px; }
input[type="range"] { appearance: none; display: block; }
.zoombar input { width: 46px; height: 7px; background: linear-gradient(#aaa, #aaa) center / 100% 1px no-repeat; }
.zoombar input::-webkit-slider-thumb { appearance: none; width: 2px; height: 6px; background: #555; }
.zoombar span { margin-left: 4px; }

/* recorded desktop bar */
.innerbar { display: flex; height: 19px; flex: none; margin-left: 1px; background: #242d10; color: #f0f0f0; font-family: "Open Sans", sans-serif; }
.istart { width: 22px; display: grid; place-items: center; }
.search { width: 160px; display: flex; align-items: center; gap: 3px; padding: 0 5px 0 3px; background: #f0f1f0; color: #444; font-size: 7px; }
.search input { flex: 1; min-width: 0; }
.search input::placeholder { color: #555; opacity: 1; }
.iapps { display: flex; }
.iapps span { width: 23px; display: grid; place-items: center; }
.iapps .on { background: #3e4d49; border-bottom: 1px solid #76a9d8; }
.itray { flex: 1; display: flex; align-items: center; justify-content: flex-end; gap: 2px; padding-right: 8px; color: #c8ccc0; }
.itray .push { margin-left: 4px; }
.itray .i12 { margin-left: 5px; }

.seek { display: flex; align-items: center; gap: 6px; height: 13px; flex: none; padding: 0 6px 0 7px; color: #fff; font-size: 6px; font-weight: 700; }
.seek input { flex: 1; min-width: 0; height: 10px; background: linear-gradient(90deg, #b5d24e 72%, #30312b 72%) center / 100% 6px no-repeat; }
.seek input::-webkit-slider-thumb { appearance: none; width: 10px; height: 10px; border-radius: 50%; border: 3px solid #fff; background: #0e7fc0; }
.controls { display: flex; height: 24px; flex: none; color: #fff; border-top: 1px solid #3a3a33; background: #47473f; }
.cleft { width: 94px; display: flex; align-items: center; gap: 8px; padding-left: 4px; border-right: 1px solid #33332c; }
.replay { position: relative; }
.replay span { position: absolute; inset: 0; text-align: center; font: 700 6px/16px "Liberation Sans", sans-serif; }
.cmid { flex: 1; display: flex; justify-content: center; gap: 34px; padding-right: 10px; font-size: 8px; }
.cmid button { gap: 4px; }
.cmid .prev { color: #c5c7bd; }
.cright { width: 96px; display: flex; align-items: center; justify-content: space-between; padding: 0 7px; border-left: 1px solid #5a5a52; }
.chip { justify-content: center; width: 12px; height: 12px; border-radius: 2px; background: #eef0e6; color: #33332d; font-size: 7px; font-weight: 700; }

/* desktop bar */
.taskbar { display: flex; justify-content: space-between; background: #1b1b1b; color: #eee; font-family: "Open Sans", sans-serif; }
.apps { width: 43%; display: grid; grid-template-columns: repeat(12, 1fr); }
.apps span { display: grid; place-items: center; border-bottom: 2px solid transparent; }
.apps .on { background: #454545; }
.apps .run { border-bottom-color: #7fb4e0; margin: 0 3px; }
.apps .on.run { margin: 0; }
.tray { display: flex; align-items: center; gap: 2px; padding-right: 14px; }
.clock { display: flex; flex-direction: column; align-items: center; width: 34px; margin: 0 6px 0 4px; font-size: 7px; line-height: 10px; white-space: nowrap; }
```
